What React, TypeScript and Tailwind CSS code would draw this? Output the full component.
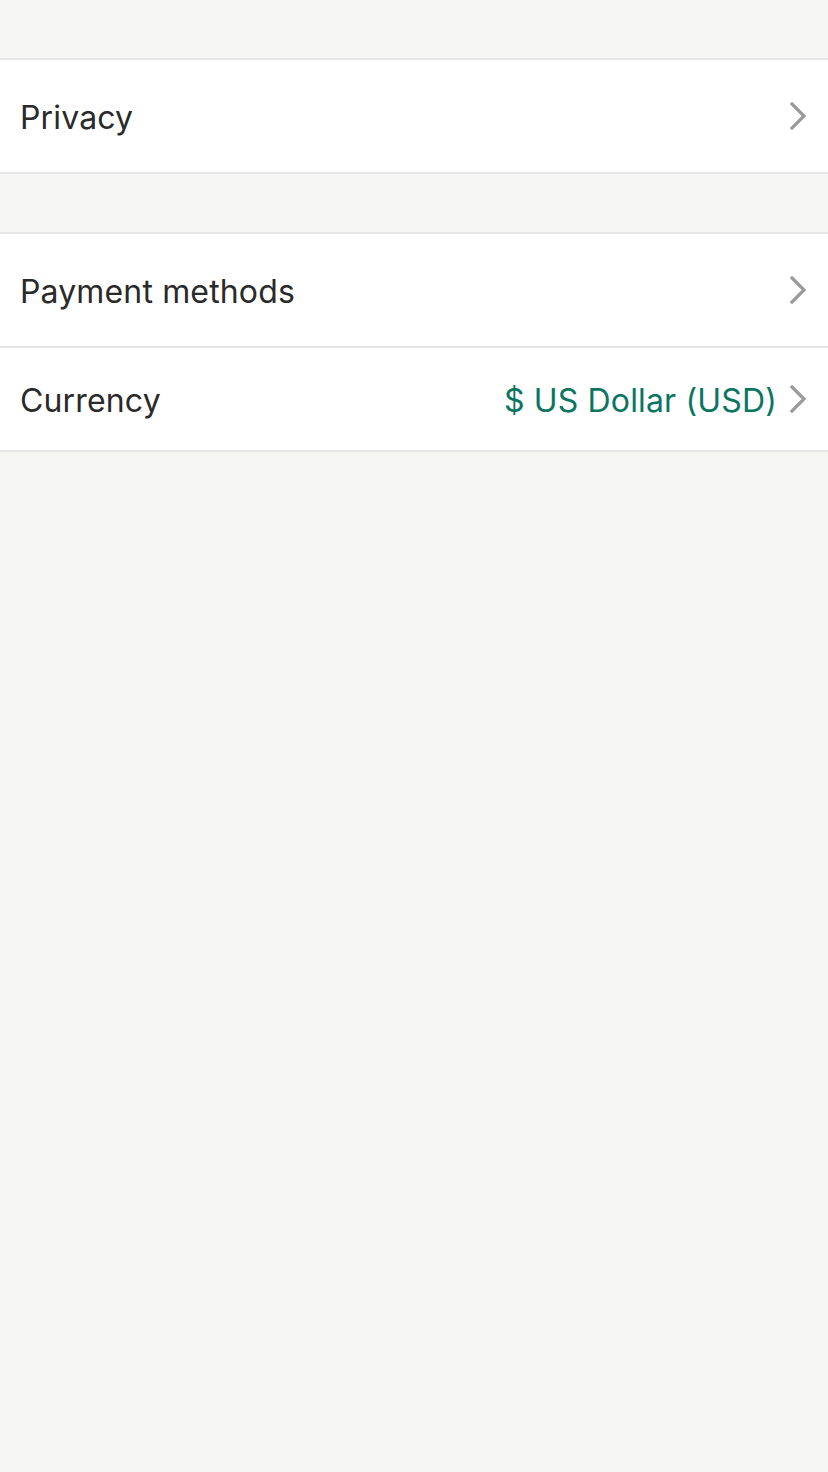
import React from "react";

function Chevron() {
  return (
    <svg width="18" height="28" viewBox="0 0 18 28" className="shrink-0">
      <path d="M3 2 L15 14 L3 26" fill="none" stroke="#9a9a9a" strokeWidth="3.2" strokeLinecap="square" />
    </svg>
  );
}

function Row({ label, value, h, border }: { label: string; value?: string; h: string; border?: boolean }) {
  return (
    <div className={`flex items-center justify-between bg-white pl-[20px] pr-[21px] ${h} ${border ? "border-b-2 border-[#e6e6e6]" : ""}`}>
      <span className="pt-[3px] text-[32px] tracking-[0.15px] text-[#2a2a2a]">{label}</span>
      <div className="flex items-center gap-[12px]">
        {value && <span className="pt-[3px] text-[32px] tracking-[0.15px] text-[#0b7562]">{value}</span>}
        <Chevron />
      </div>
    </div>
  );
}

export default function App() {
  return (
    <div className="min-h-[1472px] bg-[#f6f6f4] pt-[58px]" style={{ fontFamily: "Inter, 'Noto Sans', sans-serif" }}>
      <div className="border-y-2 border-[#e6e6e6]">
        <Row label="Privacy" h="h-[112px]" />
      </div>
      <div className="mt-[58px] border-y-2 border-[#e6e6e6]">
        <Row label="Payment methods" h="h-[114px]" border />
        <Row label="Currency" value="$ US Dollar (USD)" h="h-[102px]" />
      </div>
    </div>
  );
}
